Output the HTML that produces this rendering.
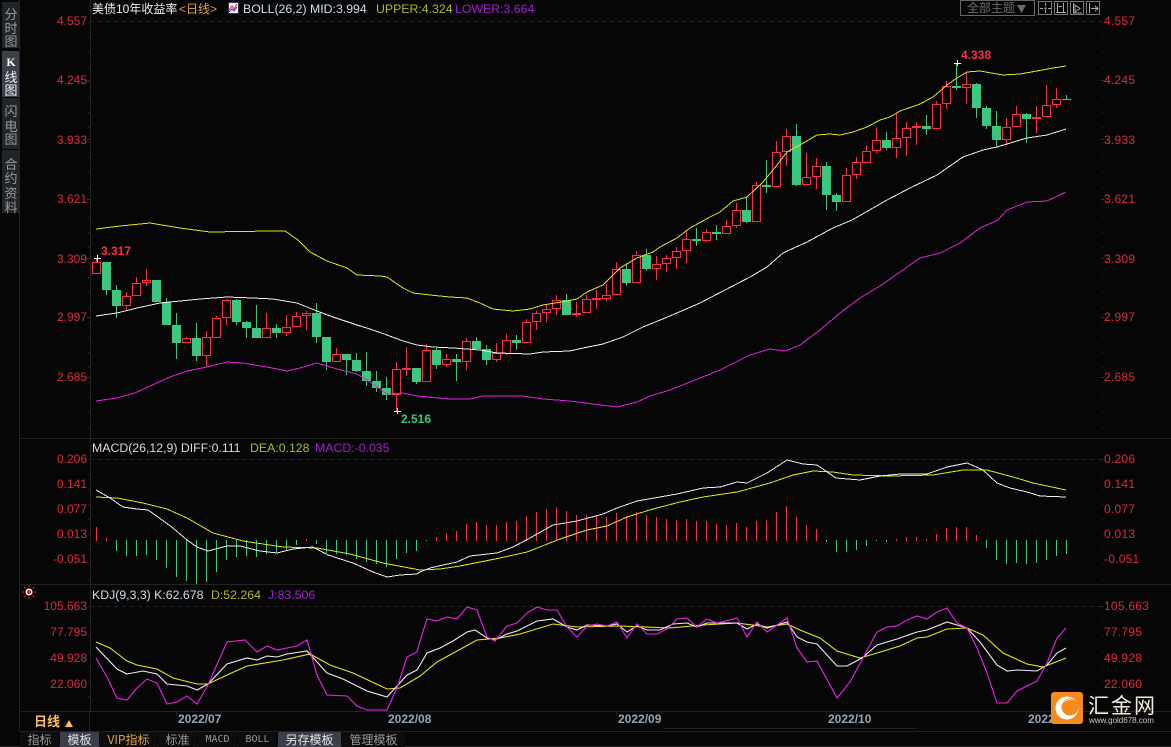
<!DOCTYPE html>
<html><head><meta charset="utf-8"><style>
html,body{margin:0;padding:0;background:#060606}
#p{position:relative;width:1171px;height:747px;overflow:hidden;background:#060606;font-family:"Liberation Sans","WenQuanYi Zen Hei","Noto Sans CJK SC",sans-serif;font-size:12px}
.t{position:absolute;white-space:nowrap;line-height:14px}
.h{font-size:12.3px;color:#cfdeea}
.y{color:#b4b81e}.m{color:#a41fd0}
.a{color:#dc2a40;font-size:12px}
.l{left:0;width:87px;text-align:right}
.r{left:1104px;letter-spacing:.02em}
.z{width:18px;left:2px;text-align:center;color:#9a9a9a;font-family:"WenQuanYi Zen Hei","Noto Sans CJK SC",sans-serif;font-size:13px}
.s{position:absolute;left:2px;width:18px;background:#22242b}
.tab{position:absolute;top:732px;height:15px;line-height:15px;text-align:center;color:#999;background:#0d0d0d;font-family:"WenQuanYi Zen Hei","Noto Sans CJK SC",sans-serif;font-size:12px}
.d{color:#94a7ba;font-weight:bold;font-size:12px}
svg{position:absolute;left:0;top:0}
</style></head><body><div id="p">
<div class="s" style="top:2px;height:46px"></div>
<div class="s" style="top:51px;height:46px;background:#3c404b"></div>
<div class="s" style="top:98px;height:51px"></div>
<div class="s" style="top:150px;height:63px"></div>
<svg width="1171" height="747" viewBox="0 0 1171 747">
<g stroke="#232323" fill="none" shape-rendering="crispEdges">
<path d="M19.5 0V731M90.5 0V711M20 438.5H1171M20 584.5H1171M20 711.5H1171M20 731.5H1171M0 746.5H1171M89.5 711V731M664 728.5H917M176.5 711V716M387.5 711V716M616.5 711V716M826.5 711V716M1026.5 711V716"/>
<path stroke="#262626" stroke-dasharray="4 4" d="M90 21.5H1102M90 459.5H1102M90 606.5H1102"/>
<path stroke="#333" stroke-dasharray="1 14" d="M1102.5 22V438M1102.5 459V584M1102.5 606V711M88.5 22V438M88.5 459V584M88.5 606V711"/>
<path stroke="#333" d="M87 80.5H90M87 139.5H90M87 199.5H90M87 258.5H90M87 317.5H90M87 377.5H90M1101 80.5H1104M1101 139.5H1104M1101 199.5H1104M1101 258.5H1104M1101 317.5H1104M1101 377.5H1104"/>
</g>
<g shape-rendering="crispEdges">
<path stroke="#ff2b4b" fill="none" d="M96.5 258V273M126.5 292V311M136.5 277V295M146.5 269V286M186.5 337V342M206.5 331V367M216.5 316V338M226.5 299V325M266.5 313V337M286.5 315V336M296.5 312V326M306.5 311V330M336.5 348V361M396.5 362V411M406.5 347V376M426.5 344V381M446.5 354V367M466.5 338V370M496.5 343V362M506.5 334V355M526.5 319V342M536.5 311V330M546.5 305V322M556.5 295V315M576.5 302V317M586.5 295V312M596.5 290V309M606.5 284V301M616.5 262V294M636.5 251V282M656.5 256V280M666.5 255V272M676.5 247V269M686.5 231V263M706.5 229V242M726.5 220V233M736.5 203V228M756.5 182V221M776.5 141V186M786.5 129V166M806.5 153V184M816.5 158V189M846.5 168V201M856.5 157V179M866.5 145V162M876.5 127V153M896.5 113V158M906.5 122V156M916.5 122V145M936.5 101V128M946.5 81V109M966.5 73V104M1006.5 118V145M1016.5 106V126M1036.5 106V133M1046.5 85V116M1056.5 88V108"/>
<path stroke="#ff2b4b" fill="#060606" d="M92.5 262.5h8v11h-8zM122.5 296.5h8v9h-8zM132.5 283.5h8v12h-8zM142.5 280.5h8v2h-8zM182.5 338.5h8v4h-8zM202.5 337.5h8v18h-8zM212.5 318.5h8v19h-8zM222.5 300.5h8v17h-8zM262.5 328.5h8v9h-8zM282.5 327.5h8v5h-8zM292.5 316.5h8v10h-8zM302.5 313.5h8v2h-8zM332.5 354.5h8v7h-8zM392.5 369.5h8v25h-8zM402.5 368.5h8v1h-8zM422.5 350.5h8v31h-8zM442.5 359.5h8v5h-8zM462.5 341.5h8v20h-8zM492.5 353.5h8v6h-8zM502.5 340.5h8v13h-8zM522.5 322.5h8v20h-8zM532.5 313.5h8v8h-8zM542.5 309.5h8v3h-8zM552.5 300.5h8v8h-8zM572.5 313.5h8v1h-8zM582.5 299.5h8v13h-8zM592.5 298.5h8v1h-8zM602.5 295.5h8v3h-8zM612.5 269.5h8v25h-8zM632.5 255.5h8v27h-8zM652.5 264.5h8v4h-8zM662.5 258.5h8v5h-8zM672.5 251.5h8v6h-8zM682.5 239.5h8v11h-8zM702.5 232.5h8v8h-8zM722.5 226.5h8v7h-8zM732.5 210.5h8v15h-8zM752.5 185.5h8v36h-8zM772.5 152.5h8v34h-8zM782.5 136.5h8v15h-8zM802.5 177.5h8v7h-8zM812.5 166.5h8v10h-8zM842.5 175.5h8v26h-8zM852.5 162.5h8v12h-8zM862.5 151.5h8v11h-8zM872.5 140.5h8v10h-8zM892.5 138.5h8v9h-8zM902.5 128.5h8v9h-8zM912.5 126.5h8v1h-8zM932.5 104.5h8v24h-8zM942.5 86.5h8v17h-8zM962.5 84.5h8v3h-8zM1002.5 127.5h8v12h-8zM1012.5 114.5h8v12h-8zM1032.5 117.5h8v1h-8zM1042.5 105.5h8v11h-8zM1052.5 99.5h8v5h-8z"/>
<path stroke="#3ac880" fill="none" d="M106.5 262V295M116.5 285V318M166.5 298V325M176.5 313V359M196.5 323V361M236.5 299V325M246.5 321V338M256.5 305V338M276.5 324V338M316.5 303V343M326.5 337V370M346.5 354V375M356.5 353V372M366.5 352V386M376.5 371V392M386.5 377V400M416.5 368V384M436.5 348V369M456.5 354V381M476.5 337V349M486.5 345V365M516.5 335V350M566.5 294V315M626.5 263V286M646.5 249V271M696.5 228V246M716.5 225V240M746.5 197V223M766.5 160V193M796.5 124V186M826.5 162V210M836.5 193V211M886.5 132V150M926.5 115V135M956.5 63V90M976.5 83V118M986.5 106V129M996.5 111V147M1026.5 113V143M1066.5 95V100"/>
<path fill="#3ac880" d="M102 262h9v28h-9zM112 290h9v16h-9zM152 280h9v22h-9zM162 302h9v23h-9zM172 325h9v18h-9zM192 338h9v18h-9zM232 300h9v22h-9zM242 322h9v6h-9zM252 328h9v10h-9zM272 328h9v5h-9zM312 313h9v24h-9zM322 337h9v25h-9zM342 354h9v6h-9zM352 360h9v11h-9zM362 371h9v10h-9zM372 381h9v7h-9zM382 388h9v7h-9zM412 368h9v14h-9zM432 350h9v15h-9zM452 359h9v3h-9zM472 341h9v8h-9zM482 349h9v11h-9zM512 340h9v3h-9zM562 300h9v15h-9zM622 269h9v14h-9zM642 255h9v14h-9zM692 239h9v2h-9zM712 232h9v2h-9zM742 210h9v12h-9zM762 185h9v2h-9zM792 136h9v49h-9zM822 166h9v29h-9zM832 195h9v7h-9zM882 140h9v8h-9zM922 126h9v3h-9zM952 86h9v2h-9zM972 84h9v24h-9zM982 108h9v18h-9zM992 126h9v14h-9zM1022 114h9v5h-9zM1062 99h9v1h-9z"/>
<path stroke="#fff" fill="none" d="M94 258.5H101M97.5 255V262M394 411.5H401M397.5 408V414M954 63.5H961M957.5 60V66"/>
</g>
<g fill="none" stroke-width="1" shape-rendering="crispEdges">
<polyline stroke="#e4e412" points="96,229 120,226 150,223 180,228 210,232 270,231 285,231 298,240 310,252 327,261 347,268 357,275 380,276 387,277 403,288 413,293 430,295 450,297 467,298 480,303 493,309 513,311 530,309 543,305 567,301 577,299 587,292 603,285 620,268 637,258 653,252 660,247 677,238 690,228 710,217 720,212 733,201 747,197 763,182 777,165 787,152 800,145 817,135 830,134 840,135 853,132 867,127 880,120 890,117 900,111 920,104 933,97 947,85 957,78 967,72 980,71 1003,75 1020,74 1037,71 1053,68 1066,66"/>
<polyline stroke="#eee" points="96,316 117,313 137,308 160,303 180,301 200,299 227,297 253,298 273,299 297,303 317,311 333,317 360,326 370,329 387,335 403,341 417,345 433,347 453,348 480,350 497,353 530,354 543,352 570,351 583,348 603,344 623,337 643,327 670,316 700,303 725,290 750,277 767,267 783,253 807,242 833,228 852,220 887,200 910,188 937,175 963,157 983,150 997,147 1027,138 1047,135 1066,129"/>
<polyline stroke="#e022e0" points="96,401 117,398 135,393 150,386 170,377 187,371 207,367 227,362 243,363 267,367 287,371 300,368 317,363 337,369 357,374 367,380 387,394 403,393 417,396 450,399 470,399 483,396 523,396 543,399 570,401 593,404 617,407 637,402 650,396 670,390 690,382 720,370 750,355 770,349 785,351 800,345 820,330 840,313 860,298 880,286 900,272 920,258 940,253 960,243 980,228 998,220 1007,210 1027,202 1047,201 1066,192"/>
</g>
<g shape-rendering="crispEdges">
<path stroke="#ff2b4b" d="M96.5 527V541M106.5 538V541M306.5 539V541M436.5 537V541M446.5 533V541M456.5 531V541M466.5 524V541M476.5 522V541M486.5 525V541M496.5 525V541M506.5 522V541M516.5 521V541M526.5 516V541M536.5 512V541M546.5 509V541M556.5 507V541M566.5 511V541M576.5 515V541M586.5 515V541M596.5 516V541M606.5 517V541M616.5 513V541M626.5 516V541M636.5 512V541M646.5 515V541M656.5 517V541M666.5 519V541M676.5 520V541M686.5 519V541M696.5 521V541M706.5 521V541M716.5 524V541M726.5 525V541M736.5 523V541M746.5 527V541M756.5 521V541M766.5 520V541M776.5 512V541M786.5 506V541M796.5 517V541M806.5 525V541M816.5 529V541M896.5 539V541M906.5 537V541M916.5 537V541M926.5 539V541M936.5 534V541M946.5 528V541M956.5 527V541M966.5 527V541M976.5 535V541"/>
<path stroke="#2fd07e" d="M116.5 540V551M126.5 540V556M136.5 540V556M146.5 540V555M156.5 540V560M166.5 540V568M176.5 540V577M186.5 540V581M196.5 540V584M206.5 540V582M216.5 540V572M226.5 540V560M236.5 540V557M246.5 540V556M256.5 540V557M266.5 540V554M276.5 540V553M286.5 540V550M296.5 540V545M316.5 540V544M326.5 540V553M336.5 540V554M346.5 540V555M356.5 540V559M366.5 540V562M376.5 540V564M386.5 540V567M396.5 540V559M406.5 540V553M416.5 540V551M426.5 540V541M826.5 540V542M836.5 540V552M846.5 540V552M856.5 540V550M866.5 540V546M876.5 540V541M886.5 540V542M986.5 540V548M996.5 540V560M1006.5 540V564M1016.5 540V563M1026.5 540V564M1036.5 540V563M1046.5 540V560M1056.5 540V556M1066.5 540V554"/>
</g>
<g fill="none" shape-rendering="crispEdges">
<polyline stroke="#e4e412" points="96,497 117,498 143,503 167,509 187,518 213,533 243,541 283,547 317,548 350,554 383,563 420,570 440,569 460,566 500,558 527,552 560,539 587,530 607,526 627,517 653,509 680,502 703,497 737,492 770,483 793,475 813,471 833,472 853,475 890,476 933,475 963,470 987,470 1013,477 1033,483 1066,490"/>
<polyline stroke="#eee" points="96,490 110,498 123,507 137,509 148,510 158,517 173,528 187,540 197,547 208,551 227,546 240,546 260,551 277,553 293,549 313,547 328,555 353,563 373,572 387,577 400,575 417,574 420,572 430,568 443,565 457,562 470,556 497,553 513,547 530,538 553,525 577,521 603,514 617,508 637,501 677,494 703,488 720,487 737,482 747,483 767,473 787,460 803,464 817,465 836,478 860,480 880,476 900,474 927,474 947,467 967,463 983,470 997,483 1010,488 1027,492 1040,496 1066,497"/>
</g>
<g fill="none" stroke-width="1.1">
<polyline stroke="#e8e810" points="96,642 110,648 127,661 137,665 157,669 173,678 197,684 208,684 227,675 247,666 283,660 310,654 330,665 353,673 387,689 400,688 420,676 437,662 477,640 500,638 520,634 553,624 577,627 620,626 670,628 703,625 737,623 767,627 787,624 800,630 820,638 837,651 860,658 877,653 900,646 917,638 927,637 947,629 967,628 983,635 1003,653 1027,664 1043,667 1066,658"/>
<polyline stroke="#eee" points="96,647 117,669 127,674 143,671 157,674 167,684 187,686 197,690 208,684 227,664 247,658 257,660 267,656 277,657 287,654 307,651 327,673 343,679 367,691 387,697 407,675 417,670 420,665 427,653 440,648 453,641 467,632 475,630 487,638 495,640 507,634 517,631 537,621 553,619 567,627 577,630 587,625 607,626 617,624 627,632 637,626 647,630 660,630 673,624 687,623 697,627 707,623 737,623 747,629 757,624 767,628 787,622 797,637 807,642 817,644 827,655 837,666 847,666 862,658 877,645 897,639 917,632 927,630 947,622 967,628 980,642 997,665 1007,671 1017,670 1037,671 1047,665 1057,653 1066,648"/>
<polyline stroke="#f020f0" points="96,658 107,677 117,698 127,700 137,688 147,679 157,683 167,704 177,702 187,696 197,704 207,687 227,642 245,640 257,652 267,646 277,650 287,648 297,646 307,640 317,675 327,695 347,696 357,706 367,710 387,710 397,688 407,657 417,652 420,641 427,619 437,621 447,617 457,619 467,607 477,610 487,637 495,641 507,626 517,623 527,613 537,607 547,610 557,610 567,627 577,637 587,626 597,624 607,626 617,622 627,638 637,624 647,634 657,634 667,629 677,619 687,618 697,627 707,619 717,623 737,618 747,637 757,622 767,632 787,618 797,648 807,662 817,661 837,698 850,682 877,632 887,627 897,626 907,620 917,616 927,619 937,612 947,608 957,623 967,628 977,648 987,673 997,703 1007,703 1017,691 1037,681 1047,663 1057,638 1066,628"/>
</g>
<rect x="228.5" y="2.5" width="10" height="11" fill="#f4f4ff" stroke="#334" />
<path d="M229 10l3-4 2 3 3-5" stroke="#e02020" fill="none"/><path d="M229 12l3-3 2 2 3-4" stroke="#2040d0" fill="none"/>
<g fill="none" stroke="#777" shape-rendering="crispEdges">
<rect x="960.5" y=".5" width="74" height="15" stroke="#666"/>
<rect x="1038.5" y="1.5" width="13" height="13"/><rect x="1054.5" y="1.5" width="13" height="13"/><rect x="1070.5" y="1.5" width="13" height="13"/><rect x="1086.5" y="1.5" width="13" height="13"/>
<path stroke="#aaa" d="M1045.5 3V6M1045.5 10V13M1040 8.5H1043M1048 8.5H1051M1045 8h1v1h-1zM1057.5 3V12M1063.5 3V12M1056 12.5H1066M1059 6.5H1062M1073.5 3V13H1082M1075 5L1080 8.5L1075 12ZM1089.5 3V13M1091 8.5H1098M1095 6L1098 8.5L1095 11"/>
</g>
<path d="M1017 5h9l-4.5 8z" fill="#6a6a6a"/>
<g stroke="#f02020" fill="none"><path d="M29 585V587M29 597V599M22 592H24M34 592H36M24 587L25.5 588.5M34 587L32.5 588.5M24 597L25.5 595.5M34 597L32.5 595.5"/></g>
<circle cx="29" cy="592" r="3.5" fill="#fff"/><circle cx="29" cy="592" r="2" fill="#ee1111"/>
<path d="M65 727l4-7 4 7z" fill="#ffc060"/>
</svg>
<div class="t z" style="top:7px">分</div><div class="t z" style="top:21px">时</div><div class="t z" style="top:34px">图</div>
<div class="t z" style="top:55px;color:#fff;font:bold 12px/14px 'Liberation Serif',serif">K</div><div class="t z" style="top:70px;color:#eee">线</div><div class="t z" style="top:83px;color:#eee">图</div>
<div class="t z" style="top:104px">闪</div><div class="t z" style="top:119px">电</div><div class="t z" style="top:132px">图</div>
<div class="t z" style="top:157px">合</div><div class="t z" style="top:171px">约</div><div class="t z" style="top:186px">资</div><div class="t z" style="top:200px">料</div>

<div class="t" style="left:92px;top:2px;color:#f0f0f0">美债10年收益率</div>
<div class="t" style="left:179px;top:2px;color:#e2a03c">&lt;日线&gt;</div>
<div class="t h" style="left:243px;top:2px">BOLL(26,2) MID:3.994</div>
<div class="t h y" style="left:376px;top:2px">UPPER:4.324</div>
<div class="t h m" style="left:455px;top:2px">LOWER:3.664</div>
<div class="t" style="left:967px;top:1px;color:#6c6c6c;font-family:'WenQuanYi Zen Hei','Noto Sans CJK SC',sans-serif">全部主题</div>

<div class="t a l" style="top:14px">4.557</div><div class="t a l" style="top:73px">4.245</div><div class="t a l" style="top:133px">3.933</div><div class="t a l" style="top:192px">3.621</div><div class="t a l" style="top:252px">3.309</div><div class="t a l" style="top:310px">2.997</div><div class="t a l" style="top:370px">2.685</div>
<div class="t a r" style="top:14px">4.557</div><div class="t a r" style="top:73px">4.245</div><div class="t a r" style="top:133px">3.933</div><div class="t a r" style="top:192px">3.621</div><div class="t a r" style="top:252px">3.309</div><div class="t a r" style="top:310px">2.997</div><div class="t a r" style="top:370px">2.685</div>

<div class="t" style="left:101px;top:244px;color:#ff2b4b;font-weight:bold;font-size:12px">3.317</div>
<div class="t" style="left:961px;top:48px;color:#ff2b4b;font-weight:bold;font-size:12px">4.338</div>
<div class="t" style="left:401px;top:412px;color:#3ac880;font-weight:bold;font-size:12px">2.516</div>

<div class="t h" style="left:92px;top:441px">MACD(26,12,9) DIFF:0.111</div>
<div class="t h y" style="left:250px;top:441px">DEA:0.128</div>
<div class="t h m" style="left:315px;top:441px">MACD:-0.035</div>
<div class="t a l" style="top:452px">0.206</div><div class="t a l" style="top:477px">0.141</div><div class="t a l" style="top:502px">0.077</div><div class="t a l" style="top:527px">0.013</div><div class="t a l" style="top:552px">-0.051</div>
<div class="t a r" style="top:452px">0.206</div><div class="t a r" style="top:477px">0.141</div><div class="t a r" style="top:502px">0.077</div><div class="t a r" style="top:527px">0.013</div><div class="t a r" style="top:552px">-0.051</div>

<div class="t h" style="left:92px;top:588px">KDJ(9,3,3) K:62.678</div>
<div class="t h y" style="left:211px;top:588px">D:52.264</div>
<div class="t h m" style="left:268px;top:588px">J:83.506</div>
<div class="t a l" style="top:599px">105.663</div><div class="t a l" style="top:625px">77.795</div><div class="t a l" style="top:651px">49.928</div><div class="t a l" style="top:677px">22.060</div>
<div class="t a r" style="top:599px">105.663</div><div class="t a r" style="top:625px">77.795</div><div class="t a r" style="top:651px">49.928</div><div class="t a r" style="top:677px">22.060</div>

<div class="t" style="left:34px;top:715px;color:#ffc060;font-weight:bold;font-size:13px">日线</div>
<div class="t d" style="left:178px;top:712px">2022/07</div>
<div class="t d" style="left:388px;top:712px">2022/08</div>
<div class="t d" style="left:618px;top:712px">2022/09</div>
<div class="t d" style="left:828px;top:712px">2022/10</div>
<div class="t d" style="left:1028px;top:712px">2022/11</div>

<div class="tab" style="left:20px;width:39px">指标</div>
<div class="tab" style="left:60px;width:39px;background:#3b3f4b;color:#e4e4e4">模板</div>
<div class="tab" style="left:100px;width:57px;color:#e0a040">VIP指标</div>
<div class="tab" style="left:158px;width:39px">标准</div>
<div class="tab" style="left:198px;width:39px;font:10px/15px 'DejaVu Sans Mono',monospace">MACD</div>
<div class="tab" style="left:238px;width:39px;font:10px/15px 'DejaVu Sans Mono',monospace">BOLL</div>
<div class="tab" style="left:278px;width:63px;background:#3b3f4b;color:#e4e4e4">另存模板</div>
<div class="tab" style="left:342px;width:63px">管理模板</div>

<svg width="1171" height="747" viewBox="0 0 1171 747" style="z-index:5">
<rect x="1051" y="692" width="32" height="32" rx="3" fill="#f78a1c"/>
<circle cx="1067" cy="708" r="11.5" fill="#fff"/>
<circle cx="1070" cy="707" r="8.5" fill="#f78a1c"/>
<path d="M1063 704a6 6 0 0 1 10-3a7 7 0 0 0-10 3z" fill="#fff"/>
</svg>
<div class="t" style="left:1088px;top:693px;z-index:6;color:#f4ebdc;font-size:21px;line-height:24px;letter-spacing:2px;font-family:'Noto Sans CJK SC',sans-serif">汇金网</div>
<div class="t" style="left:1089px;top:715px;z-index:6;color:#cfc8bc;font-size:8px;line-height:12px">www.gold678.com</div>
</div></body></html>
